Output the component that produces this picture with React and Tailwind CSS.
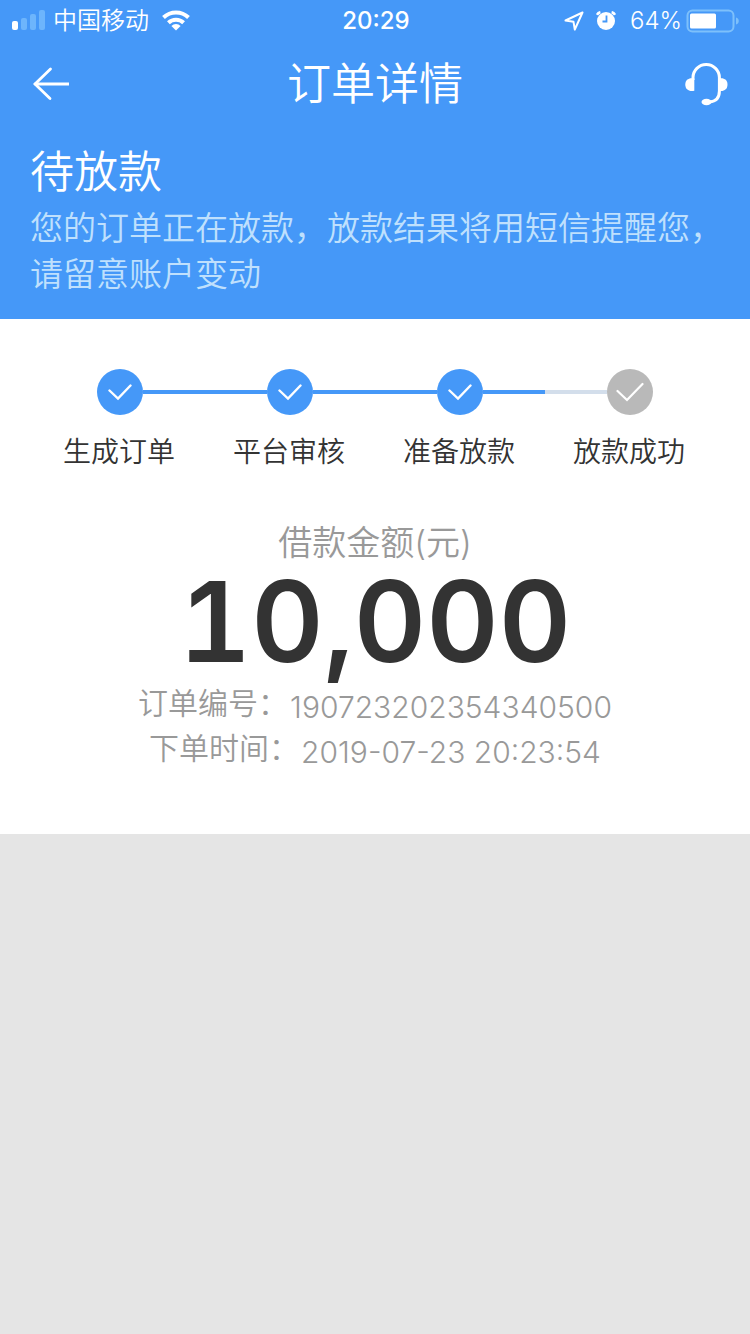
const steps = [
  { label: "生成订单", done: true },
  { label: "平台审核", done: true },
  { label: "准备放款", done: true },
  { label: "放款成功", done: false },
];

const details = [
  { label: "订单编号：", value: "190723202354340500" },
  { label: "下单时间：", value: "2019-07-23 20:23:54" },
];

function StatusBar() {
  return (
    <div className="grid h-[41px] grid-cols-[1fr_auto_1fr] items-center pl-3 pr-[10px] text-2xl">
      <div className="flex items-center gap-2">
        <svg width="33" height="22" viewBox="0 0 33 22" fill="#fff">
          <rect x="0" y="11" width="6" height="9" rx="2" />
          <rect x="9" y="8" width="6" height="12" rx="2" className="fill-[#6db5fc]" />
          <rect x="18" y="4" width="6" height="16" rx="2" className="fill-[#6db5fc]" />
          <rect x="27" y="0" width="6" height="20" rx="2" className="fill-[#6db5fc]" />
        </svg>
        <span>中国移动</span>
        <svg className="ml-1" width="30" height="22" viewBox="0 0 30 22" fill="none" stroke="#fff" strokeWidth="4">
          <path d="M2.5 7.5a18 18 0 0 1 25 0" />
          <path d="M7.4 12.7a11 11 0 0 1 15.2 0" />
          <path d="M15 20.5l-4.6-4.6a6.6 6.6 0 0 1 9.2 0z" fill="#fff" stroke="none" />
        </svg>
      </div>

      <time className="font-medium">20:29</time>

      <div className="flex items-center justify-end">
        <svg width="20" height="20" viewBox="0 0 20 20" fill="none" stroke="#fff" strokeWidth="2" strokeLinejoin="round">
          <path d="M18.5 1.5L1.5 9.5l8 1.3 1.3 7.7z" />
        </svg>
        <svg className="ml-3" width="20" height="20" viewBox="0 0 20 20" fill="none">
          <circle cx="10" cy="10" r="9" fill="#fff" />
          <path d="M1 3.8a5 5 0 0 1 3.4-2.6M19 3.8a5 5 0 0 0-3.4-2.6" stroke="#fff" strokeWidth="2.6" />
          <path d="M10.5 4.5v6H6.5" className="stroke-[#4598f8]" strokeWidth="1.8" />
        </svg>
        <span className="ml-[14px] mr-1">64%</span>
        <svg width="54" height="24" viewBox="0 0 54 24" fill="none">
          <rect x="1.5" y="1.5" width="46" height="21" rx="5" className="stroke-[#7dc0fb]" strokeWidth="2" />
          <rect x="4" y="4.5" width="26" height="15" rx="1.5" fill="#fff" />
          <path d="M50 8.5a3.6 3.6 0 0 1 0 7z" className="fill-[#7dc0fb]" />
        </svg>
      </div>
    </div>
  );
}

function NavBar() {
  return (
    <nav className="flex h-[86px] items-center justify-between px-[22px]">
      <button type="button" aria-label="返回" className="flex w-16 items-center pl-[10px]">
        <svg width="38" height="34" viewBox="0 0 38 34" fill="none" stroke="#fff" strokeWidth="2.8" strokeLinecap="round">
          <path d="M37 17H2.5" strokeLinecap="butt" />
          <path d="M18.5 2L3 17l15 14.5" strokeLinejoin="miter" />
        </svg>
      </button>
      <h1 className="text-[44px] leading-none">订单详情</h1>
      <button type="button" aria-label="客服" className="flex w-16 justify-end">
        <svg width="44" height="44" viewBox="0 0 44 44" fill="none" stroke="#fff" strokeWidth="3">
          <path d="M9 18v-2.5a13.2 13 0 0 1 26.4 0v13.5c0 7-4 10.5-10 11" />
          <path d="M10.3 16.5v12.2c-5 1.200-9-1-9-6.200s4-7.200 9-6z" fill="#fff" stroke="none" />
          <path d="M34.500 16.500v12.200c5 1.200 9-1 9-6.200s-4-7.200-9-6z" fill="#fff" stroke="none" />
          <ellipse cx="22.5" cy="40" rx="5" ry="3.3" fill="#fff" stroke="none" />
        </svg>
      </button>
    </nav>
  );
}

function Step({ label, done, first, last }) {
  const line = done ? "bg-[#4598f8]" : "bg-[#d3deeb]";
  return (
    <li className="flex-1">
      <div className="flex items-center">
        <span className={`h-1 flex-1 ${first ? "" : line}`} />
        <span
          className={`flex size-[46px] items-center justify-center rounded-full ${
            done ? "bg-[#4598f8]" : "bg-[#b9b9b9]"
          }`}
        >
          {done ? (
            <svg width="24" height="18" viewBox="0 0 24 18" fill="none" stroke="#fff" strokeWidth="2.4" strokeLinecap="round">
              <path d="M1.5 7.5L10 15.5 22.5 2.5" />
            </svg>
          ) : (
            <svg width="28" height="20" viewBox="0 0 28 20" fill="none" stroke="#fff" strokeWidth="2.2" strokeLinecap="round">
              <path d="M1.5 9L11 18 26.5 2" />
            </svg>
          )}
        </span>
        <span className={`h-1 flex-1 ${last ? "" : line}`} />
      </div>
      <p className="mt-[14px] pr-[2px] text-center text-[28px] leading-[46px] text-[#333]">{label}</p>
    </li>
  );
}

export default function App() {
  return (
    <div className="min-h-screen bg-[#e5e5e5] font-['Inter','Noto_Sans_CJK_SC',sans-serif] font-[350]">
      <header className="bg-[#4598f8] text-white">
        <StatusBar />
        <NavBar />
        <div className="pt-[18px] pr-6 pb-[22px] pl-[30px]">
          <h2 className="text-[44px] leading-[54px]">待放款</h2>
          <p className="mt-[6px] text-[33px] leading-[46px] text-[#bfe0fd]">
            您的订单正在放款，放款结果将用短信提醒您，请留意账户变动
          </p>
        </div>
      </header>

      <main className="bg-white pb-[63px]">
        <ol className="flex px-[35px] pt-[50px]">
          {steps.map((step, i) => (
            <Step key={step.label} {...step} first={i === 0} last={i === steps.length - 1} />
          ))}
        </ol>

        <section className="mt-11 text-center text-[#999]">
          <h3 className="text-[34px] leading-[48px]">借款金额(元)</h3>
          <p className="text-[112px] leading-[108px] font-semibold text-[#333] tabular-nums">10,000</p>
          <dl className="mt-[6px] text-[30px] leading-[45px]">
            {details.map((item) => (
              <div key={item.label} className="flex h-[45px] justify-center gap-[2px]">
                <dt>{item.label}</dt>
                <dd className="pt-1">{item.value}</dd>
              </div>
            ))}
          </dl>
        </section>
      </main>
    </div>
  );
}
